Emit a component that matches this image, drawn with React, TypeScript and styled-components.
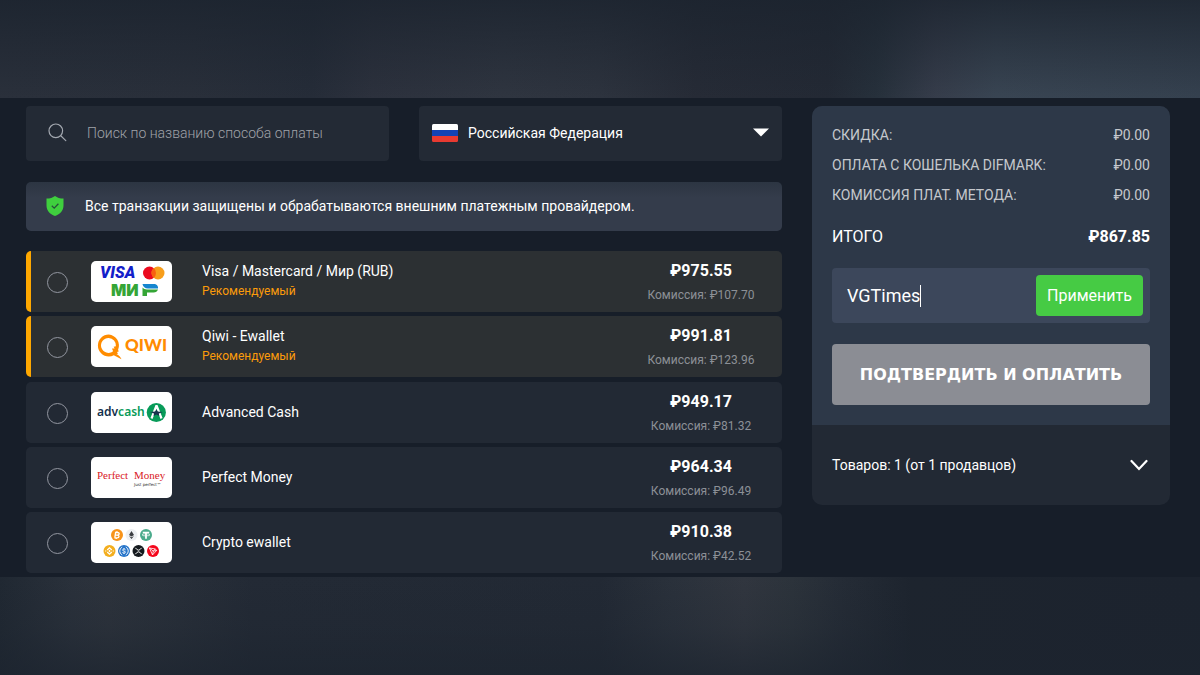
import React from "react";
import styled, { createGlobalStyle } from "styled-components";

const GlobalStyle = createGlobalStyle`
  *, *::before, *::after { box-sizing: border-box; }
  body {
    margin: 0;
    background: #171e29;
    color: #fff;
    font-family: Roboto, "Liberation Sans", sans-serif;
    font-size: 14px;
    line-height: 20px;
  }
  button, input, select { font: inherit; color: inherit; }
`;

const Page = styled.div`
  min-height: 100vh;
  display: flex;
  flex-direction: column;
`;

const TopBand = styled.div`
  height: 98px;
  flex: none;
  background:
    linear-gradient(180deg, rgba(27, 35, 46, 0.8) 0%, rgba(27, 35, 46, 0.4) 50%, rgba(27, 35, 46, 0) 100%),
    linear-gradient(90deg, #2a303b 0%, #292f3a 16%, #252c38 26%, #2c313d 31%, #2f3540 42%, #2d333e 50%, #262b36 58%, #232934 69%, #26303b 73%, #363d4b 78%, #394553 83%, #35414f 100%);
`;

const BottomBand = styled.div`
  flex: 1;
  min-height: 98px;
  background:
    linear-gradient(180deg, rgba(28, 36, 47, 0) 0%, rgba(28, 36, 47, 0.2) 50%, rgba(28, 36, 47, 0.7) 100%),
    linear-gradient(90deg, #202832 0%, #2a313b 6%, #2d333c 9%, #282f39 15%, #232a35 21%, #222934 50%, #2a313b 56%, #31363f 62%, #2c333b 66%, #252c36 70%, #1d242e 76%, #1c232e 100%);
`;

const Checkout = styled.main`
  display: grid;
  grid-template-columns: minmax(0, 756fr) minmax(0, 358fr);
  gap: 30px;
  align-items: start;
  padding: 8px 30px 4px 26px;
`;

const Filters = styled.div`
  display: grid;
  grid-template-columns: 1fr 1fr;
  gap: 30px;
`;

const FilterBox = styled.label<{ $inset: number; $gap: number }>`
  height: 55px;
  display: flex;
  align-items: center;
  gap: ${(p) => p.$gap}px;
  padding: 0 ${(p) => p.$inset}px 2px;
  background: #232a35;
  border-radius: 4px;
`;

const SearchInput = styled.input`
  flex: 1;
  min-width: 0;
  padding: 0;
  border: 0;
  outline: 0;
  background: none;
  font-weight: 300;
  &::placeholder { color: #a0a3a9; opacity: 1; }
`;

const CountrySelect = styled.select`
  flex: 1;
  min-width: 0;
  padding: 0;
  border: 0;
  outline: 0;
  background: none;
  appearance: none;
  option { color: #111; }
`;

const Notice = styled.p`
  display: flex;
  align-items: center;
  gap: 20px;
  height: 49px;
  margin: 21px 0 20px;
  padding: 0 19px 2px;
  background: linear-gradient(180deg, #2c3542 0, #343c4b 16px);
  border-radius: 5px;
`;

const MethodGroups = styled.div`
  display: grid;
  gap: 5px;
`;

const MethodGroup = styled.div`
  display: grid;
  gap: 4px;
`;

const Method = styled.label<{ $featured?: boolean }>`
  display: flex;
  align-items: center;
  height: 61px;
  overflow: hidden;
  border-radius: 5px;
  border-left: 5px solid ${(p) => (p.$featured ? "#ffa800" : "#222934")};
  background: ${(p) => (p.$featured ? "#2c3033" : "#222934")};
`;

const Radio = styled.input`
  appearance: none;
  flex: none;
  width: 21px;
  height: 21px;
  margin: 2px 23px 0 16px;
  border: 1px solid #9296a0;
  border-radius: 50%;
  &:checked { background: #46cb44; }
`;

const LogoCard = styled.span`
  flex: none;
  width: 81px;
  height: 41px;
  border-radius: 5px;
  overflow: hidden;
  background: #fff;
  svg { display: block; }
`;

const MethodName = styled.span`
  flex: 1;
  display: flex;
  flex-direction: column;
  padding: 0 0 2px 30px;
`;

const Recommended = styled.span`
  color: #fb9b0a;
  font-size: 12px;
`;

const Cost = styled.span`
  width: 162px;
  padding-top: 2px;
  text-align: center;
  line-height: 25px;
`;

const Price = styled.strong`
  display: block;
  font-size: 16px;
  font-weight: 700;
`;

const Fee = styled.span`
  display: block;
  color: #8c9097;
  font-size: 12px;
`;

const Summary = styled.aside`
  border-radius: 10px;
  overflow: hidden;
  background: #222934;
`;

const Order = styled.form`
  display: flex;
  flex-direction: column;
  padding: 19px 20px 20px;
  background: #2d3848;
`;

const Totals = styled.dl`
  display: grid;
  gap: 10px;
  margin: 0;
`;

const TotalLine = styled.div<{ $grand?: boolean }>`
  display: flex;
  justify-content: space-between;
  color: ${(p) => (p.$grand ? "#fff" : "#c5c8cd")};
  font-size: ${(p) => (p.$grand ? 16 : 14)}px;
  margin-top: ${(p) => (p.$grand ? 12 : 0)}px;
  dd {
    margin: 0;
    font-weight: ${(p) => (p.$grand ? 700 : 400)};
  }
`;

const Promo = styled.div`
  display: flex;
  align-items: center;
  height: 55px;
  margin: 21px 0;
  padding: 0 7px 0 15px;
  background: #3c475b;
  border-radius: 4px;
`;

const PromoInput = styled.input`
  field-sizing: content;
  max-width: 160px;
  padding: 0;
  border: 0;
  outline: 0;
  background: none;
  font-size: 18px;
  line-height: 22px;
`;

const Caret = styled.span`
  width: 1px;
  height: 22px;
  background: #fff;
`;

const ApplyButton = styled.button`
  width: 107px;
  height: 41px;
  margin-left: auto;
  padding: 0;
  border: 0;
  border-radius: 4px;
  background: #46cb44;
  font-size: 16px;
`;

const PayButton = styled.button`
  height: 61px;
  padding: 0;
  border: 0;
  border-radius: 4px;
  background: #8b8d94;
  font-family: "DejaVu Sans", sans-serif;
  font-size: 16px;
  font-weight: 700;
`;

const ItemsToggle = styled.button`
  width: 100%;
  height: 80px;
  display: flex;
  align-items: center;
  justify-content: space-between;
  padding: 0 22px 0 20px;
  border: 0;
  background: none;
`;

const SearchIcon = () => (
  <svg width="19" height="19" viewBox="0 0 19 19" fill="none" stroke="#a3a8b0" strokeWidth="1.2" strokeLinecap="round">
    <circle cx="7.8" cy="7.8" r="6.8" />
    <path d="M12.8 12.8 17.8 17.6" />
  </svg>
);

const FlagIcon = () => (
  <svg width="26" height="18" viewBox="0 0 26 18">
    <clipPath id="flag-shape"><rect width="26" height="18" rx="1.5" /></clipPath>
    <g clipPath="url(#flag-shape)">
      <rect width="26" height="6" fill="#fff" />
      <rect y="6" width="26" height="6" fill="#1343b5" />
      <rect y="12" width="26" height="6" fill="#e83a31" />
    </g>
  </svg>
);

const CaretDownIcon = () => (
  <svg width="16" height="9" viewBox="0 0 16 9"><path d="M0 .5h16L8 8.6z" fill="#fff" /></svg>
);

const ShieldIcon = () => (
  <svg width="20" height="20" viewBox="0 0 20 20">
    <path d="M10 0c2.200 1.700 5 2.500 8.500 2.600V9.500c0 5-3.300 8.700-8.500 10.500C4.800 18.200 1.500 14.500 1.500 9.500V2.600C5 2.500 7.800 1.700 10 0z" fill="#3fcf3e" />
    <path d="m6.800 9.800 2.400 2.300 4.200-4.300" fill="none" stroke="#27503a" strokeWidth="1.300" />
  </svg>
);

const ChevronIcon = () => (
  <svg width="18" height="12" viewBox="0 0 18 12"><path d="m1.500 2 7.500 8 7.500-8" fill="none" stroke="#fff" strokeWidth="2.200" strokeLinecap="round" /></svg>
);

const CardsLogo = () => (
  <svg width="81" height="41" viewBox="0 0 81 41">
    <text x="9" y="17" fontFamily="Roboto" fontSize="16" fontWeight="900" fontStyle="italic" fill="#1320c9">VISA</text>
    <circle cx="58.500" cy="12" r="6.500" fill="#eb0a1e" />
    <circle cx="67" cy="12" r="6.500" fill="#f79e1b" />
    <path d="M62.750 7.100a6.500 6.500 0 0 1 0 9.800 6.500 6.500 0 0 1 0-9.800z" fill="#f8600f" />
    <text x="20" y="35" fontFamily="Inter" fontSize="16" fontWeight="900" fill="#35a536">МИ</text>
    <path d="M51.500 26.500c1 1.300 2.600 2 4.500 2h11c-.7 1.900-2.200 2.900-4.300 2.900h-6.700V35h-4.500z" fill="#35a536" />
    <path d="M51.500 23h11.200c2.900 0 4.700 1.900 4.300 4.600h-10.200c-2.800 0-4.700-1.800-5.300-4.600z" fill="#1686cf" />
  </svg>
);

const QiwiLogo = () => (
  <svg width="81" height="41" viewBox="0 0 81 41">
    <path d="M17.800 8.600a10.900 10.900 0 0 0 0 21.800c1.800 0 3.500-.4 5-1.200l7.700 4c-.8-2-2.700-3.900-5-5.200l1.500-.3-1-1.600 1.700-.7-.6-1.700A10.900 10.900 0 0 0 17.800 8.600zm-.1 3.500a7.400 7.400 0 0 1 7.200 8.100l-2.300.5 1 1.700-2.600.2 1.100 2.600a7.400 7.400 0 1 1-4.400-13.100z" fill="#ff8c00" />
    <text x="34" y="25" fontFamily="Lato" fontSize="17" fontWeight="900" fill="#ff8c00">QIWI</text>
  </svg>
);

const AdvcashLogo = () => (
  <svg width="81" height="41" viewBox="0 0 81 41">
    <text x="6" y="24" fontFamily="Noto Sans" fontSize="12" fontWeight="600" fill="#14304d">adv<tspan fill="#079a58">cash</tspan></text>
    <circle cx="65.300" cy="20.500" r="9.600" fill="#089b59" />
    <path d="M65.500 13.500 60.500 26.500M65.500 13.500 70.500 26.500" stroke="#fff" strokeWidth="2.200" fill="none" />
    <path d="m59 20 5.200-.5 1.200-2 1.200 2 5.200.5-4 1.500.5 2.500-2.900-1.500-2.900 1.500.5-2.500z" fill="#17324d" />
  </svg>
);

const PerfectMoneyLogo = () => (
  <svg width="81" height="41" viewBox="0 0 81 41">
    <text x="6" y="22" fontFamily="Liberation Serif" fontSize="11" fill="#d92026">Perfect</text>
    <text x="43" y="22" fontFamily="Liberation Serif" fontSize="11" fill="#d92026">Money</text>
    <text x="43" y="29" fontFamily="DejaVu Sans" fontSize="4" fill="#222">Just perfect™</text>
  </svg>
);

const CryptoLogo = () => (
  <svg width="81" height="41" viewBox="0 0 81 41">
    <g transform="translate(26 13)">
      <circle r="6" fill="#f7931a" />
      <path d="M-1.300-3.200-2.200 2.900M-1.500-2.500H.6c2.400.2 2 2.700-.3 2.600h-2M.2.100c2.600.2 2.200 2.900-.4 2.700h-2.400M.1-3.900l-.2 1.300M-.6 2.800l-.2 1.200" fill="none" stroke="#fff" strokeWidth="1.300" />
    </g>
    <g transform="translate(40.500 13)">
      <circle r="6" fill="#eef0f3" />
      <path d="M0-4 2.500 0 0 1.500-2.500 0zM0 4 2.500.9 0 2.300-2.500.9z" fill="#3a3c40" />
    </g>
    <g transform="translate(55 13)">
      <circle r="6" fill="#4bab8c" />
      <path d="M-3.200-3.200h6.400v1.500H.9v5.500H-.9v-5.500h-2.300z" fill="#fff" />
      <ellipse rx="4" ry="1.100" cy="-.2" fill="none" stroke="#fff" strokeWidth=".7" />
    </g>
    <g transform="translate(18.500 29)">
      <circle r="6" fill="#f3ae1e" />
      <path d="M-2.300-1 0-3.200 2.300-1M-2.300 1 0 3.200 2.300 1" fill="none" stroke="#fff" strokeWidth="1.200" />
      <path d="M0-1.200 1.200 0 0 1.200-1.200 0zM-3.700-.8-2.900 0l-.8.8-.8-.8zM3.700-.8l.8.8-.8.8L2.900 0z" fill="#fff" />
    </g>
    <g transform="translate(33 29)">
      <circle r="6" fill="#2775ca" />
      <path d="M-1.800-3.900a4.300 4.300 0 0 0 0 7.800M1.800-3.900a4.300 4.300 0 0 1 0 7.800" fill="none" stroke="#fff" strokeWidth=".9" />
      <path d="M1.500-1.200C1.200-2.200-1.500-2.200-1.500-.9S1.500-.2 1.500 1.100-1.300 2.400-1.600 1.200M0-3v1M0 2v1" fill="none" stroke="#fff" strokeWidth=".9" />
    </g>
    <g transform="translate(47.500 29)">
      <circle r="6" fill="#14191d" />
      <path d="M-3.200-3.200-1.300-1.300Q0-.3 1.300-1.300L3.200-3.200M-3.200 3.200-1.300 1.300Q0 .3 1.300 1.300L3.200 3.200" fill="none" stroke="#fff" strokeWidth="1" />
    </g>
    <g transform="translate(62 29)">
      <circle r="6" fill="#f5061b" />
      <path d="m-3.600-3 5.700.9L3.700-.6-.5 3.900zM-3.600-3 .3.100 3.700-.6M.3.100-.5 3.900M.3.100l1.800-2.200" fill="none" stroke="#fff" strokeWidth=".8" strokeLinejoin="round" />
    </g>
  </svg>
);

interface PaymentMethod {
  id: string;
  name: string;
  price: string;
  fee: string;
  Logo: () => React.JSX.Element;
}

const recommended: PaymentMethod[] = [
  { id: "cards", name: "Visa / Mastercard / Мир (RUB)", price: "₽975.55", fee: "₽107.70", Logo: CardsLogo },
  { id: "qiwi", name: "Qiwi - Ewallet", price: "₽991.81", fee: "₽123.96", Logo: QiwiLogo },
];

const others: PaymentMethod[] = [
  { id: "advcash", name: "Advanced Cash", price: "₽949.17", fee: "₽81.32", Logo: AdvcashLogo },
  { id: "perfect", name: "Perfect Money", price: "₽964.34", fee: "₽96.49", Logo: PerfectMoneyLogo },
  { id: "crypto", name: "Crypto ewallet", price: "₽910.38", fee: "₽42.52", Logo: CryptoLogo },
];

const MethodRow = ({ method, featured }: { method: PaymentMethod; featured?: boolean }) => (
  <Method $featured={featured}>
    <Radio type="radio" name="method" value={method.id} />
    <LogoCard aria-hidden="true"><method.Logo /></LogoCard>
    <MethodName>
      <span>{method.name}</span>
      {featured && <Recommended>Рекомендуемый</Recommended>}
    </MethodName>
    <Cost>
      <Price>{method.price}</Price>
      <Fee>Комиссия: {method.fee}</Fee>
    </Cost>
  </Method>
);

export default function App() {
  return (
    <Page>
      <GlobalStyle />
      <TopBand />
      <Checkout>
        <section>
          <Filters>
            <FilterBox $inset={22} $gap={20}>
              <SearchIcon />
              <SearchInput type="text" aria-label="Поиск" placeholder="Поиск по названию способа оплаты" />
            </FilterBox>
            <FilterBox $inset={13} $gap={10}>
              <FlagIcon />
              <CountrySelect aria-label="Страна" defaultValue="ru">
                <option value="ru">Российская Федерация</option>
              </CountrySelect>
              <CaretDownIcon />
            </FilterBox>
          </Filters>
          <Notice>
            <ShieldIcon />
            Все транзакции защищены и обрабатываются внешним платежным провайдером.
          </Notice>
          <MethodGroups>
            <MethodGroup>
              {recommended.map((m) => <MethodRow key={m.id} method={m} featured />)}
            </MethodGroup>
            <MethodGroup>
              {others.map((m) => <MethodRow key={m.id} method={m} />)}
            </MethodGroup>
          </MethodGroups>
        </section>
        <Summary>
          <Order onSubmit={(e) => e.preventDefault()}>
            <Totals>
              <TotalLine><dt>СКИДКА:</dt><dd>₽0.00</dd></TotalLine>
              <TotalLine><dt>ОПЛАТА С КОШЕЛЬКА DIFMARK:</dt><dd>₽0.00</dd></TotalLine>
              <TotalLine><dt>КОМИССИЯ ПЛАТ. МЕТОДА:</dt><dd>₽0.00</dd></TotalLine>
              <TotalLine $grand><dt>ИТОГО</dt><dd>₽867.85</dd></TotalLine>
            </Totals>
            <Promo>
              <PromoInput type="text" aria-label="Промокод" defaultValue="VGTimes" />
              <Caret />
              <ApplyButton type="button">Применить</ApplyButton>
            </Promo>
            <PayButton type="submit">ПОДТВЕРДИТЬ И ОПЛАТИТЬ</PayButton>
          </Order>
          <ItemsToggle type="button">
            Товаров: 1 (от 1 продавцов)
            <ChevronIcon />
          </ItemsToggle>
        </Summary>
      </Checkout>
      <BottomBand />
    </Page>
  );
}
